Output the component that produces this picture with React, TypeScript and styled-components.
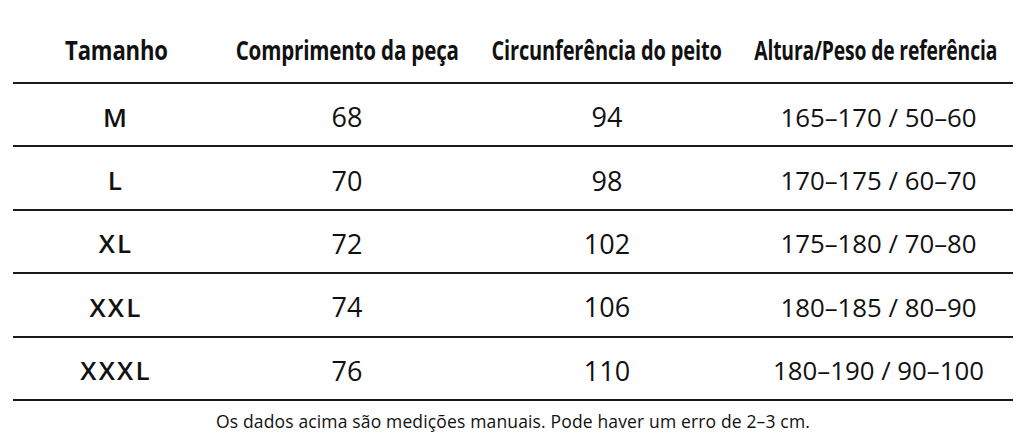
import React from "react";
import styled, { createGlobalStyle } from "styled-components";

const Global = createGlobalStyle`
  html, body { margin: 0; padding: 0; background: #ffffff; }
  body { width: 1024px; height: 439px; overflow: hidden; }
`;

const Page = styled.div`
  width: 1024px;
  height: 439px;
  box-sizing: border-box;
  padding: 0 11px 0 13px;
  display: flex;
  flex-direction: column;
  color: #111111;
`;

const Row = styled.div<{ $head?: boolean }>`
  flex-shrink: 0;
  display: grid;
  grid-template-columns: 206px 256px 264px 274px;
  align-items: center;
  box-sizing: border-box;
  height: ${(p) => (p.$head ? "84px" : "63.4px")};
  padding-top: ${(p) => (p.$head ? "18px" : "4px")};
  border-bottom: 2px solid #1a1a1a;
`;

const HeadCell = styled.div`
  display: flex;
  justify-content: center;
  white-space: nowrap;
  min-width: 0;
`;

const HeadText = styled.span<{ $sx: number }>`
  flex-shrink: 0;
  display: inline-block;
  font-family: "Open Sans", sans-serif;
  font-weight: 700;
  font-size: 26px;
  letter-spacing: -0.2px;
  transform: scaleX(${(p) => p.$sx});
  transform-origin: center;
`;

const SizeCell = styled.div`
  text-align: center;
  font-family: "Open Sans", sans-serif;
  font-weight: 600;
  font-size: 26px;
  letter-spacing: 2.2px;
`;

const ValueCell = styled.div<{ $small?: boolean }>`
  text-align: center;
  font-family: "Open Sans", sans-serif;
  font-weight: 400;
  font-size: ${(p) => (p.$small ? "25.8px" : "27px")};
  white-space: nowrap;
  padding-left: ${(p) => (p.$small ? "5px" : "0")};
`;

const Note = styled.div`
  flex-shrink: 0;
  text-align: center;
  font-family: "Open Sans", sans-serif;
  font-weight: 500;
  font-size: 17.5px;
  letter-spacing: 0.15px;
  margin-top: 8px;
`;

const heads: [string, number][] = [
  ["Tamanho", 0.85],
  ["Comprimento da peça", 0.79],
  ["Circunferência do peito", 0.77],
  ["Altura/Peso de referência", 0.742],
];

const rows = [
  ["M", "68", "94", "165–170 / 50–60"],
  ["L", "70", "98", "170–175 / 60–70"],
  ["XL", "72", "102", "175–180 / 70–80"],
  ["XXL", "74", "106", "180–185 / 80–90"],
  ["XXXL", "76", "110", "180–190 / 90–100"],
];

export default function App() {
  return (
    <>
      <Global />
      <Page>
        <Row $head>
          {heads.map(([t, sx]) => (
            <HeadCell key={t}>
              <HeadText $sx={sx}>{t}</HeadText>
            </HeadCell>
          ))}
        </Row>
        {rows.map((r) => (
          <Row key={r[0]}>
            <SizeCell>{r[0]}</SizeCell>
            <ValueCell>{r[1]}</ValueCell>
            <ValueCell>{r[2]}</ValueCell>
            <ValueCell $small>{r[3]}</ValueCell>
          </Row>
        ))}
        <Note>Os dados acima são medições manuais. Pode haver um erro de 2–3 cm.</Note>
      </Page>
    </>
  );
}
